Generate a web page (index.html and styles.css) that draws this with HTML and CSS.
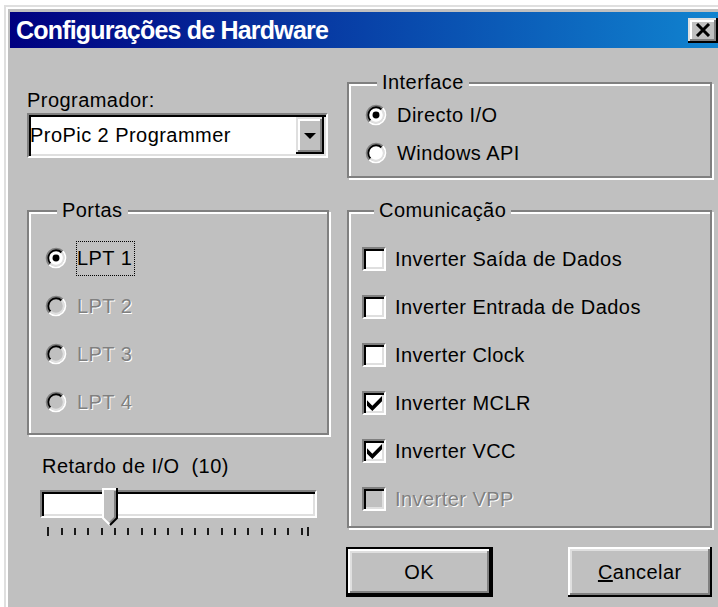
FILE: index.html
```html
<!DOCTYPE html>
<html lang="pt">
<head>
<meta charset="utf-8">
<title>Configurações de Hardware</title>
<link rel="stylesheet" href="styles.css">
</head>
<body>
<div class="window">
  <div class="titlebar">
    <span class="title">Configurações de Hardware</span>
    <button class="close" aria-label="Fechar">
      <svg width="16" height="14" viewBox="0 0 16 14"><path d="M2 1L14 13M14 1L2 13" stroke="#000" stroke-width="3" fill="none"/></svg>
    </button>
  </div>

  <div class="content">
    <div class="col-left">
      <div class="prog-label">Programador:</div>
      <div class="combo">
        <span class="combo-text">ProPic 2 Programmer</span>
        <span class="combo-btn">
          <svg width="12" height="6" viewBox="0 0 12 6"><polygon points="0,0 12,0 6,6" fill="#000"/></svg>
        </span>
      </div>

      <fieldset class="group portas">
        <legend>Portas</legend>
        <div class="option">
          <svg class="radio" viewBox="0 0 24 24"><circle class="face" cx="12" cy="12" r="8"/><path d="M4.58 19.42A10.5 10.5 0 0 1 19.42 4.58" stroke="#808080"/><path d="M19.42 4.58A10.5 10.5 0 0 1 4.58 19.42" stroke="#fff"/><path d="M5.99 18.01A8.5 8.5 0 0 1 18.01 5.99" stroke="#000"/><path d="M18.01 5.99A8.5 8.5 0 0 1 5.99 18.01" stroke="#dfdfdf"/><circle class="dot" cx="12" cy="12" r="3.8"/></svg>
          <span class="opt-label focus">LPT 1</span>
        </div>
        <div class="option disabled">
          <svg class="radio" viewBox="0 0 24 24"><circle class="face" cx="12" cy="12" r="8"/><path d="M4.58 19.42A10.5 10.5 0 0 1 19.42 4.58" stroke="#808080"/><path d="M19.42 4.58A10.5 10.5 0 0 1 4.58 19.42" stroke="#fff"/><path d="M5.99 18.01A8.5 8.5 0 0 1 18.01 5.99" stroke="#000"/><path d="M18.01 5.99A8.5 8.5 0 0 1 5.99 18.01" stroke="#dfdfdf"/></svg>
          <span class="opt-label">LPT 2</span>
        </div>
        <div class="option disabled">
          <svg class="radio" viewBox="0 0 24 24"><circle class="face" cx="12" cy="12" r="8"/><path d="M4.58 19.42A10.5 10.5 0 0 1 19.42 4.58" stroke="#808080"/><path d="M19.42 4.58A10.5 10.5 0 0 1 4.58 19.42" stroke="#fff"/><path d="M5.99 18.01A8.5 8.5 0 0 1 18.01 5.99" stroke="#000"/><path d="M18.01 5.99A8.5 8.5 0 0 1 5.99 18.01" stroke="#dfdfdf"/></svg>
          <span class="opt-label">LPT 3</span>
        </div>
        <div class="option disabled">
          <svg class="radio" viewBox="0 0 24 24"><circle class="face" cx="12" cy="12" r="8"/><path d="M4.58 19.42A10.5 10.5 0 0 1 19.42 4.58" stroke="#808080"/><path d="M19.42 4.58A10.5 10.5 0 0 1 4.58 19.42" stroke="#fff"/><path d="M5.99 18.01A8.5 8.5 0 0 1 18.01 5.99" stroke="#000"/><path d="M18.01 5.99A8.5 8.5 0 0 1 5.99 18.01" stroke="#dfdfdf"/></svg>
          <span class="opt-label">LPT 4</span>
        </div>
      </fieldset>

      <div class="delay-label">Retardo de I/O&nbsp; (10)</div>
      <div class="slider">
        <div class="track"></div>
        <svg class="thumb" width="16" height="38" viewBox="0 0 16 38">
          <polygon points="0,0 16,0 16,30 8,38 0,30" fill="#c0c0c0"/>
          <polyline points="8,37 1,30 1,1 15,1" stroke="#fff" stroke-width="2" fill="none"/>
          <polyline points="13,3 13,29.5 8,34.5" stroke="#808080" stroke-width="2" fill="none"/>
          <polyline points="15,0 15,30 8,37" stroke="#000" stroke-width="2" fill="none"/>
        </svg>
        <svg class="ticks" width="277" height="20" viewBox="0 0 277 20">
          <g fill="#1a1a1a">
            <rect x="7" y="9" width="2" height="9"/>
            <rect x="21" y="10" width="2" height="7"/>
            <rect x="34" y="10" width="2" height="7"/>
            <rect x="47" y="10" width="2" height="7"/>
            <rect x="61" y="10" width="2" height="7"/>
            <rect x="74" y="10" width="2" height="7"/>
            <rect x="87" y="10" width="2" height="7"/>
            <rect x="101" y="10" width="2" height="7"/>
            <rect x="114" y="10" width="2" height="7"/>
            <rect x="127" y="10" width="2" height="7"/>
            <rect x="141" y="10" width="2" height="7"/>
            <rect x="154" y="10" width="2" height="7"/>
            <rect x="167" y="10" width="2" height="7"/>
            <rect x="181" y="10" width="2" height="7"/>
            <rect x="194" y="10" width="2" height="7"/>
            <rect x="207" y="10" width="2" height="7"/>
            <rect x="221" y="10" width="2" height="7"/>
            <rect x="234" y="10" width="2" height="7"/>
            <rect x="247" y="10" width="2" height="7"/>
            <rect x="261" y="10" width="2" height="7"/>
            <rect x="267" y="9" width="2" height="9"/>
          </g>
        </svg>
      </div>
    </div>

    <div class="col-right">
      <fieldset class="group interface">
        <legend>Interface</legend>
        <div class="option">
          <svg class="radio" viewBox="0 0 24 24"><circle class="face" cx="12" cy="12" r="8"/><path d="M4.58 19.42A10.5 10.5 0 0 1 19.42 4.58" stroke="#808080"/><path d="M19.42 4.58A10.5 10.5 0 0 1 4.58 19.42" stroke="#fff"/><path d="M5.99 18.01A8.5 8.5 0 0 1 18.01 5.99" stroke="#000"/><path d="M18.01 5.99A8.5 8.5 0 0 1 5.99 18.01" stroke="#dfdfdf"/><circle class="dot" cx="12" cy="12" r="3.8"/></svg>
          <span class="opt-label">Directo I/O</span>
        </div>
        <div class="option">
          <svg class="radio" viewBox="0 0 24 24"><circle class="face" cx="12" cy="12" r="8"/><path d="M4.58 19.42A10.5 10.5 0 0 1 19.42 4.58" stroke="#808080"/><path d="M19.42 4.58A10.5 10.5 0 0 1 4.58 19.42" stroke="#fff"/><path d="M5.99 18.01A8.5 8.5 0 0 1 18.01 5.99" stroke="#000"/><path d="M18.01 5.99A8.5 8.5 0 0 1 5.99 18.01" stroke="#dfdfdf"/></svg>
          <span class="opt-label">Windows API</span>
        </div>
      </fieldset>

      <fieldset class="group comm">
        <legend>Comunicação</legend>
        <div class="option">
          <span class="check"></span>
          <span class="opt-label">Inverter Saída de Dados</span>
        </div>
        <div class="option">
          <span class="check"></span>
          <span class="opt-label">Inverter Entrada de Dados</span>
        </div>
        <div class="option">
          <span class="check"></span>
          <span class="opt-label">Inverter Clock</span>
        </div>
        <div class="option">
          <span class="check"><svg width="15" height="15" viewBox="0 0 7 7"><polygon points="0,2 2.5,4.5 7,0 7,2.5 2.5,7 0,4.5" fill="#000"/></svg></span>
          <span class="opt-label">Inverter MCLR</span>
        </div>
        <div class="option">
          <span class="check"><svg width="15" height="15" viewBox="0 0 7 7"><polygon points="0,2 2.5,4.5 7,0 7,2.5 2.5,7 0,4.5" fill="#000"/></svg></span>
          <span class="opt-label">Inverter VCC</span>
        </div>
        <div class="option disabled">
          <span class="check"></span>
          <span class="opt-label">Inverter VPP</span>
        </div>
      </fieldset>

      <div class="buttons">
        <button class="btn ok">OK</button>
        <button class="btn cancel"><u>C</u>ancelar</button>
      </div>
    </div>
  </div>
</div>
</body>
</html>
```

FILE: styles.css
```css
html, body {
  margin: 0;
  overflow: hidden;
}

body {
  height: 607px;
  box-sizing: border-box;
  padding: 5px 0 0 4px;
  background: #fff;
  font-family: "Liberation Sans", Arial, sans-serif;
  font-size: 20px;
  letter-spacing: 0.45px;
  color: #000;
}

/* Dialog frame; its lower and right edges sit past the viewport */
.window {
  width: 724px;
  height: 602px;
  box-sizing: border-box;
  background: #c0c0c0;
  border: 2px solid;
  border-color: #dfdfdf #000 #000 #dfdfdf;
  border-bottom: 0;
  box-shadow: inset 2px 2px #fff;
  padding: 5px 4px 0 4px;
  overflow: hidden;
}

.titlebar {
  height: 36px;
  display: flex;
  align-items: center;
  justify-content: space-between;
  padding: 0 4px 0 6px;
  background: linear-gradient(to right, #000080, #1084d0);
  color: #fff;
}

.title {
  font-weight: bold;
  font-size: 25px;
  letter-spacing: -0.8px;
  line-height: 1;
}

.close {
  width: 30px;
  height: 25px;
  padding: 0;
  border: 0;
  background: #c0c0c0;
  display: flex;
  align-items: center;
  justify-content: center;
  box-shadow: inset -2px -2px #000, inset 2px 2px #dfdfdf, inset -4px -4px #808080, inset 4px 4px #fff;
}

/* Dialog body */
.content {
  display: flex;
  gap: 18px;
  padding: 23px 0 0 17px;
}

.col-left {
  width: 302px;
  flex: none;
}

.col-right {
  width: 365px;
  flex: none;
}

.prog-label {
  margin-top: 18px;
  line-height: 23px;
}

/* Sunken field used by the combo box and the slider track */
.combo,
.track {
  box-sizing: border-box;
  border: 2px solid;
  border-color: #808080 #fff #fff #808080;
  box-shadow: inset 2px 2px #000, inset -2px -2px #dfdfdf;
  background: #fff;
}

.combo {
  margin-top: 1px;
  width: 301px;
  height: 45px;
  padding: 2px;
  display: flex;
}

.combo-text {
  flex: 1;
  line-height: 37px;
  margin-left: -1px;
}

.combo-btn {
  width: 28px;
  flex: none;
  background: #c0c0c0;
  display: flex;
  align-items: center;
  justify-content: center;
  box-shadow: inset -2px -2px #000, inset 2px 2px #dfdfdf, inset -4px -4px #808080, inset 4px 4px #fff;
}

/* Group boxes */
.group {
  margin: 0;
  padding: 0;
  min-inline-size: 0;
  border: 2px solid #808080;
  box-shadow: inset 2px 2px #fff, 2px 2px #fff;
}

.group legend {
  margin-left: 12px;
  padding: 0 5px;
  line-height: 23px;
  background: #c0c0c0;
}

.portas {
  margin-top: 41px;
  padding: 12px 0 7px 16px;
}

.interface {
  padding: 2px 0 4px 16px;
}

.comm {
  margin-top: 21px;
  padding: 13px 0 3px 13px;
}

.option {
  display: flex;
  align-items: center;
  height: 48px;
}

.interface .option {
  height: 38px;
}

.opt-label {
  margin-left: 9px;
  padding: 5px 2px 5px 0;
  border: 1px dotted transparent;
  line-height: 23px;
  white-space: nowrap;
}

.check + .opt-label {
  margin-left: 8px;
}

.opt-label.focus {
  border-color: #000;
}

.disabled .opt-label {
  color: #808080;
  text-shadow: 1px 1px #fff;
}

/* Radio buttons */
.radio {
  width: 22px;
  height: 22px;
  flex: none;
}

.radio path {
  fill: none;
  stroke-width: 2;
}

.radio .face {
  fill: #fff;
}

.disabled .radio .face {
  fill: #c0c0c0;
}

.radio .dot {
  fill: #000;
}

/* Check boxes */
.check {
  width: 24px;
  height: 24px;
  flex: none;
  box-sizing: border-box;
  border: 2px solid;
  border-color: #808080 #fff #fff #808080;
  box-shadow: inset 2px 2px #000, inset -2px -2px #dfdfdf;
  background: #fff;
  display: flex;
  align-items: center;
  justify-content: center;
}

.disabled .check {
  background: #c0c0c0;
}

/* Delay slider */
.delay-label {
  margin: 20px 0 0 15px;
  line-height: 23px;
}

.slider {
  position: relative;
  width: 277px;
  margin: 12px 0 0 13px;
}

.track {
  height: 28px;
}

.thumb {
  position: absolute;
  left: 62px;
  top: -2px;
}

.ticks {
  display: block;
}

/* Push buttons */
.buttons {
  display: flex;
  gap: 75px;
  margin: 19px 0 0 -1px;
}

.btn {
  height: 50px;
  box-sizing: border-box;
  padding: 0;
  border: 0;
  font: inherit;
  letter-spacing: inherit;
  color: #000;
  background: #c0c0c0;
  box-shadow: inset -2px -2px #000, inset 2px 2px #fff, inset -4px -4px #808080, inset 4px 4px #dfdfdf;
}

.btn.ok {
  width: 149px;
  border: 2px solid #000;
}

.btn.cancel {
  width: 147px;
}
```
